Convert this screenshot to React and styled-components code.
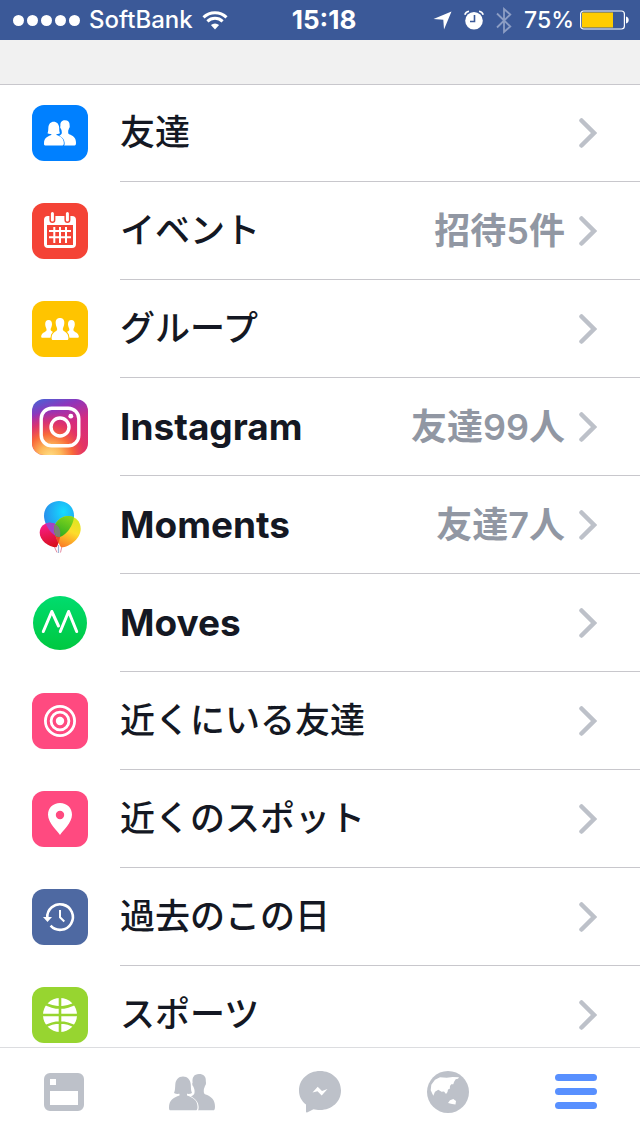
import styled, { createGlobalStyle } from 'styled-components'
import { useState } from 'react'

const GlobalStyle = createGlobalStyle`
    *{
        box-sizing:border-box;
    }
    body{
        margin:0;
        background-color:#fff;
        font-family: Inter, 'Noto Sans CJK JP', sans-serif;
    }
`

const Page = styled.div`
    display:flex;
    flex-direction:column;
    height:100vh;
`

/* status bar */
const StatusBar = styled.header`
    display:grid;
    grid-template-columns:1fr auto 1fr;
    align-items:center;
    flex:none;
    height:40px;
    padding:0 11px 0 13px;
    background-color:#3b5998;
    color:#fff;
    font-size:24px;
    font-weight:500;
    line-height:40px;
`
const Side = styled.div`
    display:flex;
    align-items:center;
    justify-content:${props => props.$end ? 'flex-end' : 'flex-start'};
    gap:${props => props.$end ? '12px' : '9px'};
`
const Dots = styled.div`
    display:flex;
    gap:3px;
`
const Dot = styled.span`
    width:11px;
    height:11px;
    border-radius:50%;
    background-color:#fff;
`
const Time = styled.time`
    padding-left:6px;
    font-size:26px;
    font-weight:700;
`
const Power = styled.div`
    display:flex;
    align-items:center;
    gap:6px;
    font-size:23px;
`

const Spacer = styled.div`
    flex:none;
    height:45px;
    background-color:#f1f1f1;
    border-bottom:1px solid #c8c7cc;
`

/* menu list */
const List = styled.ul`
    flex:1;
    min-height:0;
    margin:0;
    padding:0;
    list-style:none;
    overflow-y:auto;
    scrollbar-width:none;
`
const Row = styled.a`
    display:flex;
    padding-left:32px;
    color:#141823;
    text-decoration:none;
    li:first-child &{
        margin-top:-1px;
    }
`
const Tile = styled.span`
    display:flex;
    align-items:center;
    justify-content:center;
    flex:none;
    width:56px;
    height:56px;
    margin:21px 32px 21px 0;
    border-radius:12px;
    background:${props => props.$color};
    color:#fff;
    overflow:hidden;
`
const Body = styled.span`
    display:flex;
    align-items:center;
    flex:1;
    padding-right:43px;
    border-bottom:1px solid #c8c7cc;
`
const Label = styled.span`
    flex:1;
    font-size:${props => props.$latin ? '37px' : '35px'};
    font-weight:${props => props.$latin ? 700 : 500};
    line-height:48px;
    padding-bottom:${props => props.$latin ? '0' : '2px'};
    white-space:nowrap;
`
const Value = styled.span`
    margin-right:14px;
    color:#9197a3;
    font-size:36px;
    font-weight:600;
    line-height:48px;
    white-space:nowrap;
`

/* tabs */
const TabBar = styled.nav`
    display:flex;
    flex:none;
    height:89px;
    border-top:1px solid #dcdde0;
    background-color:#fff;
`
const Tab = styled.button`
    display:flex;
    align-items:center;
    justify-content:center;
    flex:1;
    padding:0;
    border:0;
    background:none;
    color:${props => props.$active ? '#5890ff' : '#bdc1c9'};
    cursor:pointer;
`

const Wifi = () => (
    <svg width="26" height="19" viewBox="0 0 26 19" fill="none" stroke="#fff" strokeWidth="3">
        <path d="M1.5 6.3A16.5 16.5 0 0 1 24.5 6.3" />
        <path d="M5.4 10.3A11 11 0 0 1 20.6 10.3" />
        <path d="M13 18.5L8.9 14.1A6 6 0 0 1 17.1 14.1Z" fill="#fff" stroke="none" />
    </svg>
)

const Location = () => (
    <svg width="19" height="19" viewBox="0 0 19 19" fill="#fff">
        <path d="M18.5.5L11 18.5L10.3 8.7L.5 8Z" />
    </svg>
)

const Alarm = () => (
    <svg width="20" height="20" viewBox="0 0 20 20">
        <circle cx="10" cy="10.7" r="8.8" fill="#fff" />
        <path d="M.8 4.8A5 5 0 0 1 5 1.2M15 1.2A5 5 0 0 1 19.2 4.8" fill="none" stroke="#fff" strokeWidth="1.6" />
        <path d="M10.5 5V11.5H6" fill="none" stroke="#3b5998" strokeWidth="1.6" />
    </svg>
)

const Bluetooth = () => (
    <svg width="16" height="27" viewBox="0 0 16 27" fill="none" stroke="#8c9dc4" strokeWidth="1.8">
        <path d="M1 6.5L14.3 19.5L8 25V2L14.3 7.5L1 20.5" />
    </svg>
)

const Battery = () => (
    <svg width="49" height="20" viewBox="0 0 49 20">
        <rect x=".6" y="1" width="43.8" height="18" rx="3" fill="none" stroke="#fff" strokeWidth="1.2" />
        <rect x="2" y="2.5" width="31" height="15" fill="#fc0" />
        <path d="M46 6.5C49.6 7 49.6 13 46 13.5Z" fill="#fff" />
    </svg>
)

const People = ({ width, height }) => (
    <svg width={width} height={height} viewBox="0 0 46 37" fill="currentColor">
        <path d="M14 2.5C18.5 2.5 21.5 6 21.8 10.5C22 14 21.8 16 23 19C21.5 20 19.5 20 18 19.8V21.5C24 23.5 28.5 26 28.5 33C28.5 35.5 28 36.3 26.5 36.3H1.8C.3 36.3 0 35.5 0 33.5C0 26 4.5 23.5 10.5 21.5V19.8C8.5 20 6.5 20 5 19C6.3 16 6 14 6.3 10.5C6.6 6 9.5 2.5 14 2.5Z" />
        <path d="M30 0C34.5 0 37 2.5 36.8 6.5C36.8 8 37.2 8.5 36.9 10C36.7 11.3 36.2 11.5 35.8 12.5C35.4 14 34.8 14.8 34.8 16C34.8 18 34.6 19.5 36 20.3C42 22.5 46 25.5 46 32.5C46 35.5 45.5 36.3 44 36.3H28.9C29.6 35.5 29.7 34.5 29.6 32.5C29.3 27.5 26 24.5 22 22.5C24.5 21 25.8 20 25.6 17.5C25.6 15.5 25 14 24.3 12.5C23.4 11.8 22.8 9.5 23.6 8.5C23 3.5 25 0 30 0Z" />
    </svg>
)

const Glyph = ({ children, ...rest }) => (
    <svg width="56" height="56" viewBox="0 0 56 56" {...rest}>{children}</svg>
)

const FriendsIcon = () => <People width="32" height="26" />

const EventsIcon = () => (
    <Glyph fill="none">
        <path fill="#fff" fillRule="evenodd" d="M16 13H40A4 4 0 0 1 44 17V41A4 4 0 0 1 40 45H16A4 4 0 0 1 12 41V17A4 4 0 0 1 16 13ZM15 22V42H41V22Z" />
        <path d="M20.4 10.5V17M35.4 10.5V17" stroke="#f44336" strokeWidth="6" strokeLinecap="round" />
        <path d="M20.4 10.5V17M35.4 10.5V17" stroke="#fff" strokeWidth="3" strokeLinecap="round" />
        <path d="M22.3 24V40M28 24V40M34 24V40M17 28H39M17 34.3H39" stroke="#fff" strokeWidth="2" />
    </Glyph>
)

const GroupsIcon = () => (
    <Glyph fill="#fff">
        <path d="M16.6 19C19 19 20.2 20.8 20 23.6C19.9 26 18.6 27.2 18.6 28.6C18.6 30 20.3 30.6 21 31C19.6 32.4 18.8 34 18.6 36.7H10C9.3 36.7 9.1 36.2 9.2 35.3C9.5 31.2 14.4 31.2 14.6 29C14.6 27.4 13.3 26 13.2 23.6C13 20.8 14.2 19 16.6 19Z" />
        <path d="M39.4 19C37 19 35.8 20.8 36 23.6C36.1 26 37.4 27.2 37.4 28.6C37.4 30 35.7 30.6 35 31C36.4 32.4 37.2 34 37.4 36.7H46C46.7 36.7 46.9 36.2 46.8 35.3C46.5 31.2 41.6 31.2 41.4 29C41.4 27.4 42.7 26 42.8 23.6C43 20.8 41.8 19 39.4 19Z" />
        <path d="M28 17C31.2 17 32.5 19.2 32.3 22.2C32.2 25.3 30.8 26.2 30.8 28.2C31 31 36.4 30.5 36.4 37C36.4 38.4 36 39 35 39H21C20 39 19.6 38.4 19.6 37C19.6 30.5 25 31 25.2 28.2C25.2 26.2 23.8 25.3 23.7 22.2C23.5 19.2 24.8 17 28 17Z" stroke="#ffc400" strokeWidth="1.6" paintOrder="stroke" />
    </Glyph>
)

const InstagramIcon = () => (
    <Glyph fill="none">
        <defs>
            <linearGradient id="ig-base" x1="0" y1="0" x2=".35" y2="1">
                <stop offset="0" stopColor="#4168d8" />
                <stop offset=".28" stopColor="#8f35bb" />
                <stop offset=".6" stopColor="#d52b80" />
                <stop offset="1" stopColor="#e0336a" />
            </linearGradient>
            <radialGradient id="ig-warm" gradientUnits="userSpaceOnUse" cx="18" cy="58" r="46">
                <stop offset="0" stopColor="#ffdf85" />
                <stop offset=".25" stopColor="#fdb85a" />
                <stop offset=".5" stopColor="#f8683a" />
                <stop offset=".75" stopColor="#e63560" stopOpacity=".7" />
                <stop offset="1" stopColor="#d52b80" stopOpacity="0" />
            </radialGradient>
        </defs>
        <rect width="56" height="56" fill="url(#ig-base)" />
        <rect width="56" height="56" fill="url(#ig-warm)" />
        <rect x="9.2" y="9.2" width="37.6" height="37.6" rx="10.5" stroke="#fff" strokeWidth="3.4" />
        <circle cx="28" cy="28" r="9" stroke="#fff" strokeWidth="3.4" />
        <circle cx="38.8" cy="17.2" r="2.4" fill="#fff" />
    </Glyph>
)

const BLUE_BALLOON = 'M27 4C35.5 4 42 10.5 42 18.5C42 28 34 39 27 40C20 39 12 28 12 18.5C12 10.5 18.5 4 27 4Z'
const RED_BALLOON = 'M18 25.7C24 25.7 28.3 30 28.3 36C28.3 42 26 48 24.5 50.3C16 50 7.7 43 7.7 35.7C7.7 30 12 25.7 18 25.7Z'
const YELLOW_BALLOON = 'M36 19C43.5 19 48.7 24.5 48.7 32C48.7 41 38 50.3 29 50.3C26 46 23 39 22 32C22 26 28.5 19 36 19Z'

const MomentsIcon = () => (
    <Glyph>
        <defs>
            <radialGradient id="bl-blue" cx=".65" cy=".3" r=".8">
                <stop offset="0" stopColor="#14dcff" />
                <stop offset="1" stopColor="#2c7fe8" />
            </radialGradient>
            <linearGradient id="bl-yellow" x1=".7" y1="0" x2=".3" y2="1">
                <stop offset="0" stopColor="#d9e821" />
                <stop offset=".45" stopColor="#fddc2b" />
                <stop offset="1" stopColor="#fb7a26" />
            </linearGradient>
            <linearGradient id="bl-red" x1=".3" y1="0" x2=".5" y2="1">
                <stop offset="0" stopColor="#fb1c8f" />
                <stop offset="1" stopColor="#d8101c" />
            </linearGradient>
            <linearGradient id="bl-green" x1=".7" y1="0" x2=".3" y2="1">
                <stop offset="0" stopColor="#8ad91c" />
                <stop offset="1" stopColor="#0e9c22" />
            </linearGradient>
            <clipPath id="clip-blue"><path d={BLUE_BALLOON} /></clipPath>
            <clipPath id="clip-red"><path d={RED_BALLOON} /></clipPath>
        </defs>
        <path d="M22.5 50L25 55.5M30 49L28.5 55.5" stroke="#e58aa0" fill="none" />
        <path d="M26.5 48V56" stroke="#9eb4d8" strokeWidth="1.2" fill="none" />
        <path fill="url(#bl-blue)" d={BLUE_BALLOON} />
        <path fill="url(#bl-red)" d={RED_BALLOON} />
        <path fill="#a244c8" clipPath="url(#clip-blue)" d={RED_BALLOON} />
        <path fill="url(#bl-yellow)" d={YELLOW_BALLOON} />
        <g clipPath="url(#clip-red)">
            <path fill="#ee4a20" d={YELLOW_BALLOON} />
        </g>
        <g clipPath="url(#clip-blue)">
            <path fill="url(#bl-green)" d={YELLOW_BALLOON} />
            <g clipPath="url(#clip-red)">
                <path fill="#7d7f78" d={YELLOW_BALLOON} />
            </g>
        </g>
    </Glyph>
)

const MovesIcon = () => (
    <Glyph fill="none">
        <defs>
            <linearGradient id="moves" x1="0" y1="0" x2="0" y2="1">
                <stop offset="0" stopColor="#00dc6e" />
                <stop offset="1" stopColor="#00c840" />
            </linearGradient>
        </defs>
        <circle cx="28" cy="28" r="27" fill="url(#moves)" />
        <path d="M11.3 36.5L19.8 16.5L26.5 31M28.3 36.5L36.6 16.5L44.7 36.5" stroke="#fff" strokeWidth="3" strokeLinecap="round" strokeLinejoin="round" />
    </Glyph>
)

const NearbyFriendsIcon = () => (
    <Glyph fill="none" stroke="#fff" strokeWidth="2.8">
        <circle cx="28" cy="28" r="14.6" />
        <circle cx="28" cy="28" r="8.9" />
        <circle cx="28" cy="28" r="4.2" fill="#fff" stroke="none" />
    </Glyph>
)

const PlacesIcon = () => (
    <Glyph fill="#fff">
        <path fillRule="evenodd" d="M28 12C35 12 40 17 40 23.7C40 32 30.5 40 28 44C25.5 40 16 32 16 23.7C16 17 21 12 28 12ZM28 19.8A4.2 4.2 0 1 0 28 28.2A4.2 4.2 0 1 0 28 19.8Z" />
    </Glyph>
)

const OnThisDayIcon = () => (
    <Glyph fill="none" stroke="#fff" strokeWidth="2.6">
        <path d="M15.3 29A12.8 12.8 0 1 1 18.6 36.7" />
        <path d="M11 28H20L15.5 33Z" fill="#fff" stroke="none" />
        <path d="M28 21V28.3L32.3 32.5" strokeWidth="2" />
    </Glyph>
)

const SportsIcon = () => (
    <Glyph fill="none">
        <circle cx="28" cy="28" r="17" fill="#fff" />
        <path d="M28 10V46M10 28H46M12 16Q28 25 44 16M12 40Q28 31 44 40" stroke="#97d530" strokeWidth="2.6" />
    </Glyph>
)

const Chevron = () => (
    <svg width="18" height="32" viewBox="0 0 18 32" fill="none" stroke="#bdc1c9" strokeWidth="4.5" strokeLinecap="round">
        <path d="M2.5 3.5L15 16L2.5 28.5" />
    </svg>
)

const FeedTab = () => (
    <svg width="40" height="38" viewBox="0 0 40 38" fill="currentColor">
        <path fillRule="evenodd" d="M6 0H34A6 6 0 0 1 40 6V32A6 6 0 0 1 34 38H6A6 6 0 0 1 0 32V6A6 6 0 0 1 6 0ZM6 6V12H12V6ZM6 18V32H34V18Z" />
    </svg>
)

const PeopleTab = () => <People width="46" height="37" />

const MessengerTab = () => (
    <svg width="42" height="42" viewBox="0 0 42 42" fill="currentColor">
        <path d="M21 0C33 0 42 8.5 42 19.5C42 30.5 33 39 21 39C18.5 39 16.2 38.7 14.5 38.2L8.5 41.3C7.5 41.8 7 41.3 7 40.5V33.5C2.5 30 0 25.5 0 19.5C0 8.5 9 0 21 0Z" />
        <path fill="#fff" d="M13.5 21.5L18.7 15.7L23 20L28.5 18L22.7 24.4L18.5 20.2Z" />
    </svg>
)

const GlobeTab = () => (
    <svg width="42" height="42" viewBox="0 0 42 42" fill="currentColor">
        <circle cx="21" cy="21" r="21" />
        <path fill="#fff" d="M6.3 24.7L3.7 19.3L4.3 13.7L8 8.7L13 6.3L19.7 6.8L25.7 6L32 6.3L31 7.7L28.7 8.3L27 11L26.3 13.2L24.3 13.2L23 15L22.8 17.8L21 18.5L20.5 21L19 23L17 20.5L14.5 20.8L11.3 18.8L8 20.7Z" />
        <path fill="#fff" d="M21 32L23 29.3L26.3 28L29 30L28.5 33.5L25 33Z" />
    </svg>
)

const MenuTab = () => (
    <svg width="42" height="36" viewBox="0 0 42 36" fill="currentColor">
        <rect width="42" height="7" rx="3.5" />
        <rect y="14" width="42" height="7" rx="3.5" />
        <rect y="28" width="42" height="7" rx="3.5" />
    </svg>
)

const items = [
    { label: '友達', color: '#0080ff', icon: FriendsIcon },
    { label: 'イベント', color: '#f44336', icon: EventsIcon, value: '招待5件' },
    { label: 'グループ', color: '#ffc400', icon: GroupsIcon },
    { label: 'Instagram', color: 'none', icon: InstagramIcon, value: '友達99人', latin: true },
    { label: 'Moments', color: 'none', icon: MomentsIcon, value: '友達7人', latin: true },
    { label: 'Moves', color: 'none', icon: MovesIcon, latin: true },
    { label: '近くにいる友達', color: '#ff4a80', icon: NearbyFriendsIcon },
    { label: '近くのスポット', color: '#ff4a80', icon: PlacesIcon },
    { label: '過去のこの日', color: '#4e69a2', icon: OnThisDayIcon },
    { label: 'スポーツ', color: '#97d530', icon: SportsIcon },
]

const tabs = [
    { name: 'ニュースフィード', icon: FeedTab },
    { name: '友達リクエスト', icon: PeopleTab },
    { name: 'Messenger', icon: MessengerTab },
    { name: 'お知らせ', icon: GlobeTab },
    { name: 'その他', icon: MenuTab },
]

const App = () => {
    const [active, setActive] = useState('その他');
    return (
        <Page lang="ja">
            <GlobalStyle />
            <StatusBar>
                <Side>
                    <Dots><Dot /><Dot /><Dot /><Dot /><Dot /></Dots>
                    <span>SoftBank</span>
                    <Wifi />
                </Side>
                <Time>15:18</Time>
                <Side $end>
                    <Location />
                    <Alarm />
                    <Bluetooth />
                    <Power><span>75%</span><Battery /></Power>
                </Side>
            </StatusBar>
            <Spacer />
            <List>
                {items.map(({ label, color, icon: Icon, value, latin }) => (
                    <li key={label}>
                        <Row href="#">
                            <Tile $color={color}><Icon /></Tile>
                            <Body>
                                <Label $latin={latin}>{label}</Label>
                                {value && <Value>{value}</Value>}
                                <Chevron />
                            </Body>
                        </Row>
                    </li>
                ))}
            </List>
            <TabBar>
                {tabs.map(({ name, icon: Icon }) => (
                    <Tab key={name} aria-label={name} $active={active === name} onClick={() => setActive(name)}><Icon /></Tab>
                ))}
            </TabBar>
        </Page>
    )
}

export default App
